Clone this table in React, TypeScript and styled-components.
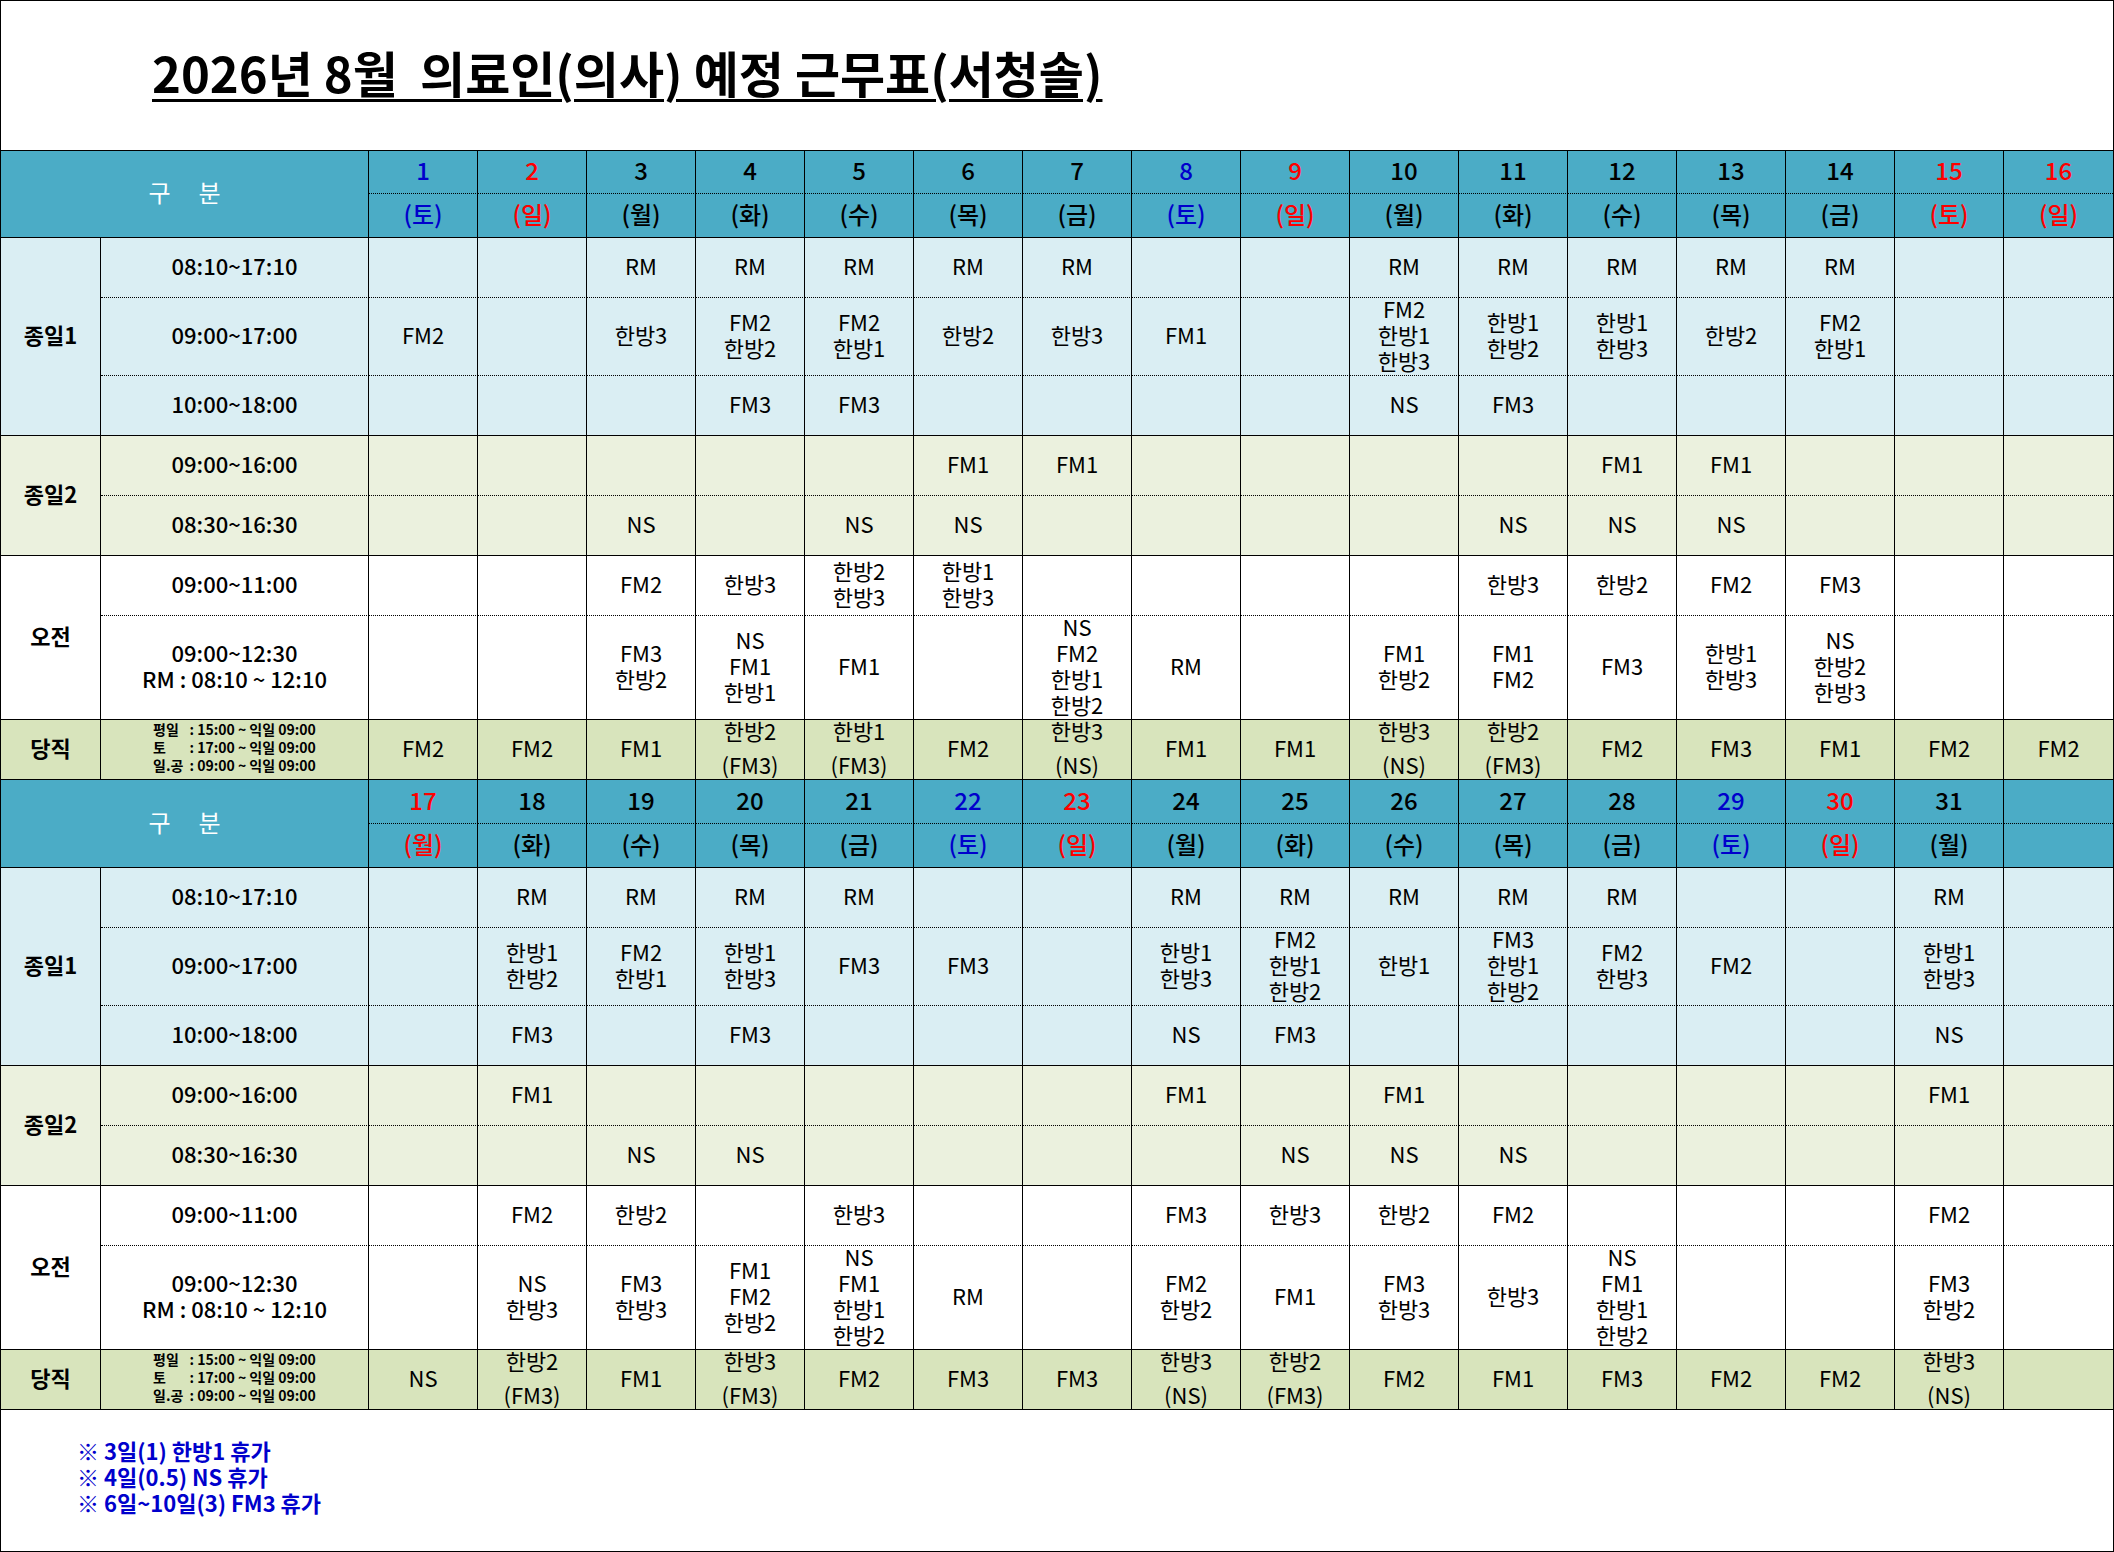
import React from "react";
import styled, { createGlobalStyle } from "styled-components";

const GlobalStyle = createGlobalStyle`
  html, body {
    margin: 0;
    padding: 0;
    background: #ffffff;
  }
  body {
    font-family: "Noto Sans CJK KR", "Noto Sans", sans-serif;
    color: #000000;
  }
`;

const colors = {
  header: "#4BACC6",
  fullDay1: "#DAEEF3",
  fullDay2: "#EBF1DE",
  morning: "#FFFFFF",
  duty: "#D8E4BC",
  blue: "#0000CC",
  red: "#FF0000",
  black: "#000000",
};

type Tone = "blue" | "red" | "black";

interface Day {
  num: string;
  dow: string;
  tone: Tone;
}

interface Half {
  days: Day[];
  cells: string[][]; // 7 shift rows + duty row, 16 cells each ("/" separates lines)
}

const d = (num: string, dow: string, tone: Tone = "black"): Day => ({ num, dow, tone });

const firstHalf: Half = {
  days: [
    d("1", "(토)", "blue"),
    d("2", "(일)", "red"),
    d("3", "(월)"),
    d("4", "(화)"),
    d("5", "(수)"),
    d("6", "(목)"),
    d("7", "(금)"),
    d("8", "(토)", "blue"),
    d("9", "(일)", "red"),
    d("10", "(월)"),
    d("11", "(화)"),
    d("12", "(수)"),
    d("13", "(목)"),
    d("14", "(금)"),
    d("15", "(토)", "red"),
    d("16", "(일)", "red"),
  ],
  cells: [
    ["", "", "RM", "RM", "RM", "RM", "RM", "", "", "RM", "RM", "RM", "RM", "RM", "", ""],
    ["FM2", "", "한방3", "FM2/한방2", "FM2/한방1", "한방2", "한방3", "FM1", "", "FM2/한방1/한방3", "한방1/한방2", "한방1/한방3", "한방2", "FM2/한방1", "", ""],
    ["", "", "", "FM3", "FM3", "", "", "", "", "NS", "FM3", "", "", "", "", ""],
    ["", "", "", "", "", "FM1", "FM1", "", "", "", "", "FM1", "FM1", "", "", ""],
    ["", "", "NS", "", "NS", "NS", "", "", "", "", "NS", "NS", "NS", "", "", ""],
    ["", "", "FM2", "한방3", "한방2/한방3", "한방1/한방3", "", "", "", "", "한방3", "한방2", "FM2", "FM3", "", ""],
    ["", "", "FM3/한방2", "NS/FM1/한방1", "FM1", "", "NS/FM2/한방1/한방2", "RM", "", "FM1/한방2", "FM1/FM2", "FM3", "한방1/한방3", "NS/한방2/한방3", "", ""],
    ["FM2", "FM2", "FM1", "한방2/(FM3)", "한방1/(FM3)", "FM2", "한방3/(NS)", "FM1", "FM1", "한방3/(NS)", "한방2/(FM3)", "FM2", "FM3", "FM1", "FM2", "FM2"],
  ],
};

const secondHalf: Half = {
  days: [
    d("17", "(월)", "red"),
    d("18", "(화)"),
    d("19", "(수)"),
    d("20", "(목)"),
    d("21", "(금)"),
    d("22", "(토)", "blue"),
    d("23", "(일)", "red"),
    d("24", "(월)"),
    d("25", "(화)"),
    d("26", "(수)"),
    d("27", "(목)"),
    d("28", "(금)"),
    d("29", "(토)", "blue"),
    d("30", "(일)", "red"),
    d("31", "(월)"),
    d("", ""),
  ],
  cells: [
    ["", "RM", "RM", "RM", "RM", "", "", "RM", "RM", "RM", "RM", "RM", "", "", "RM", ""],
    ["", "한방1/한방2", "FM2/한방1", "한방1/한방3", "FM3", "FM3", "", "한방1/한방3", "FM2/한방1/한방2", "한방1", "FM3/한방1/한방2", "FM2/한방3", "FM2", "", "한방1/한방3", ""],
    ["", "FM3", "", "FM3", "", "", "", "NS", "FM3", "", "", "", "", "", "NS", ""],
    ["", "FM1", "", "", "", "", "", "FM1", "", "FM1", "", "", "", "", "FM1", ""],
    ["", "", "NS", "NS", "", "", "", "", "NS", "NS", "NS", "", "", "", "", ""],
    ["", "FM2", "한방2", "", "한방3", "", "", "FM3", "한방3", "한방2", "FM2", "", "", "", "FM2", ""],
    ["", "NS/한방3", "FM3/한방3", "FM1/FM2/한방2", "NS/FM1/한방1/한방2", "RM", "", "FM2/한방2", "FM1", "FM3/한방3", "한방3", "NS/FM1/한방1/한방2", "", "", "FM3/한방2", ""],
    ["NS", "한방2/(FM3)", "FM1", "한방3/(FM3)", "FM2", "FM3", "FM3", "한방3/(NS)", "한방2/(FM3)", "FM2", "FM1", "FM3", "FM2", "FM2", "한방3/(NS)", ""],
  ],
};

interface Group {
  label: string;
  bg: string;
  times: string[][];
  duty?: boolean;
}

const groups: Group[] = [
  { label: "종일1", bg: colors.fullDay1, times: [["08:10~17:10"], ["09:00~17:00"], ["10:00~18:00"]] },
  { label: "종일2", bg: colors.fullDay2, times: [["09:00~16:00"], ["08:30~16:30"]] },
  { label: "오전", bg: colors.morning, times: [["09:00~11:00"], ["09:00~12:30", "RM : 08:10 ~ 12:10"]] },
  { label: "당직", bg: colors.duty, times: [[]], duty: true },
];

const dutyHours = [
  ["평일", ": 15:00 ~ 익일 09:00"],
  ["토", ": 17:00 ~ 익일 09:00"],
  ["일.공", ": 09:00 ~ 익일 09:00"],
];

const rowHeights = [43, 44, 60, 78, 60, 60, 60, 60, 104, 60, 44, 44, 60, 78, 60, 60, 60, 60, 104, 60];

const notes = ["※ 3일(1) 한방1 휴가", "※ 4일(0.5) NS 휴가", "※ 6일~10일(3) FM3 휴가"];

export default function App() {
  return (
    <>
      <GlobalStyle />
      <Page>
        <TitleBar>
          <Title>2026년 8월  의료인(의사) 예정 근무표(서청솔)</Title>
        </TitleBar>
        <Sheet $rows={rowHeights}>
          {[firstHalf, secondHalf].map((half, h) => (
            <HalfBlock key={h} half={half} />
          ))}
        </Sheet>
        <Notes>
          {notes.map((n) => (
            <Note key={n}>{n}</Note>
          ))}
        </Notes>
      </Page>
    </>
  );
}

function HalfBlock({ half }: { half: Half }) {
  let rowIndex = 0;
  return (
    <>
      <HeadLabel>
        <span>구</span>
        <span>분</span>
      </HeadLabel>
      {half.days.map((day, i) => (
        <DayNum key={"n" + i} $tone={day.tone} $last={i === 15}>
          {day.num}
        </DayNum>
      ))}
      {half.days.map((day, i) => (
        <DayName key={"w" + i} $tone={day.tone} $last={i === 15}>
          {day.dow}
        </DayName>
      ))}
      {groups.map((group) => (
        <React.Fragment key={group.label}>
          {group.times.map((time, t) => {
            const cells = half.cells[rowIndex++];
            const lastInGroup = t === group.times.length - 1;
            return (
              <React.Fragment key={t}>
                {t === 0 && (
                  <GroupLabel $span={group.times.length} $bg={group.bg}>
                    {group.label}
                  </GroupLabel>
                )}
                <TimeCell $bg={group.bg} $dotted={!lastInGroup}>
                  {group.duty ? (
                    <DutyHours>
                      {dutyHours.map(([k, v]) => (
                        <React.Fragment key={k}>
                          <span>{k}</span>
                          <span>{v}</span>
                        </React.Fragment>
                      ))}
                    </DutyHours>
                  ) : (
                    time.map((line) => <div key={line}>{line}</div>)
                  )}
                </TimeCell>
                {cells.map((value, c) => (
                  <DataCell
                    key={c}
                    $bg={group.bg}
                    $dotted={!lastInGroup}
                    $last={c === 15}
                    $duty={!!group.duty}
                  >
                    {value
                      .split("/")
                      .filter(Boolean)
                      .map((line, l) => (
                        <div key={l}>{line}</div>
                      ))}
                  </DataCell>
                ))}
              </React.Fragment>
            );
          })}
        </React.Fragment>
      ))}
    </>
  );
}

const Page = styled.div`
  width: 2114px;
  height: 1552px;
  box-sizing: border-box;
  border: 1px solid #000;
  display: flex;
  flex-direction: column;
  background: #fff;
  overflow: hidden;
`;

const TitleBar = styled.div`
  height: 149px;
  display: flex;
  align-items: center;
  padding-left: 151px;
  padding-bottom: 9px;
  box-sizing: border-box;
`;

const Title = styled.h1`
  margin: 0;
  font-family: "Noto Sans CJK KR", sans-serif;
  font-size: 49px;
  font-weight: 700;
  white-space: pre;
  text-decoration: underline;
  text-decoration-thickness: 3px;
  text-underline-offset: 6px;
  line-height: 1;
`;

const Sheet = styled.div<{ $rows: number[] }>`
  display: grid;
  grid-template-columns: 100px 268px repeat(16, 109px);
  grid-template-rows: ${(p) => p.$rows.map((r) => r + "px").join(" ")};
  border-top: 1px solid #000;
`;

const Cell = styled.div`
  box-sizing: border-box;
  display: flex;
  flex-direction: column;
  align-items: center;
  justify-content: center;
  text-align: center;
  padding-bottom: 5px;
  border-right: 1px solid #000;
  border-bottom: 1px solid #000;
  overflow: visible;
  white-space: nowrap;
`;

const HeadLabel = styled(Cell)`
  grid-column: span 2;
  grid-row: span 2;
  flex-direction: row;
  gap: 28px;
  background: ${colors.header};
  color: #fff;
  font-size: 24px;
`;

const DayNum = styled(Cell)<{ $tone: Tone; $last: boolean }>`
  background: ${colors.header};
  color: ${(p) => colors[p.$tone]};
  font-size: 24px;
  font-weight: 500;
  border-bottom: 1px dotted #000;
  border-right: ${(p) => (p.$last ? "none" : "1px solid #000")};
`;

const DayName = styled(DayNum)`
  border-bottom: 1px solid #000;
`;

const GroupLabel = styled(Cell)<{ $span: number; $bg: string }>`
  grid-row: span ${(p) => p.$span};
  background: ${(p) => p.$bg};
  font-size: 22px;
  font-weight: 700;
`;

const TimeCell = styled(Cell)<{ $bg: string; $dotted: boolean }>`
  background: ${(p) => p.$bg};
  border-bottom: 1px ${(p) => (p.$dotted ? "dotted" : "solid")} #000;
  font-size: 22px;
  font-weight: 500;
  line-height: 26px;
`;

const DataCell = styled(Cell)<{ $bg: string; $dotted: boolean; $last: boolean; $duty: boolean }>`
  background: ${(p) => p.$bg};
  border-bottom: 1px ${(p) => (p.$dotted ? "dotted" : "solid")} #000;
  border-right: ${(p) => (p.$last ? "none" : "1px solid #000")};
  font-size: 22px;
  line-height: ${(p) => (p.$duty ? "34px" : "26px")};
`;

const DutyHours = styled.div`
  display: grid;
  grid-template-columns: auto auto;
  column-gap: 6px;
  text-align: left;
  font-size: 14px;
  font-weight: 700;
  line-height: 18px;
`;

const Notes = styled.div`
  display: flex;
  flex-direction: column;
  padding: 27px 0 0 76px;
`;

const Note = styled.div`
  color: ${colors.blue};
  font-size: 22px;
  font-weight: 700;
  line-height: 26px;
`;
